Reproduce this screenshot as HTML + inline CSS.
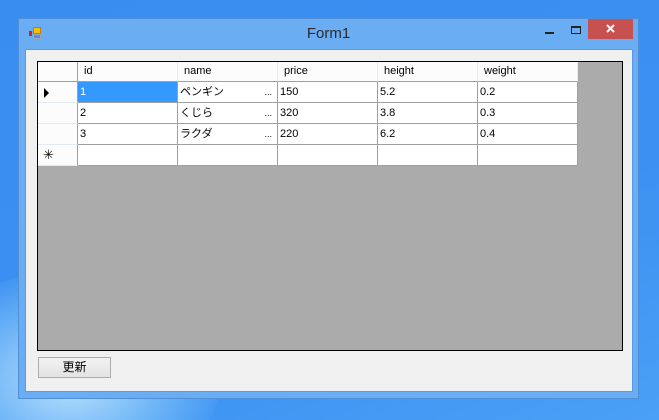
<!DOCTYPE html>
<html><head><meta charset="utf-8"><style>
*{margin:0;padding:0;box-sizing:border-box}
html,body{width:659px;height:420px;overflow:hidden}
body{position:relative;
background:linear-gradient(160deg,#3a8df0 0%,#3b90f2 60%,#4aa0f5 100%);font-family:"Liberation Sans","Noto Sans CJK JP",sans-serif}
.glow{position:absolute;left:-80px;top:270px;width:300px;height:220px;border-radius:50%;
background:radial-gradient(ellipse at center,rgba(200,235,255,0.9) 0%,rgba(150,210,250,0.5) 45%,rgba(80,160,240,0) 75%)}
.win{position:absolute;left:18px;top:18px;width:621px;height:381px;background:#6aadf3;border:1px solid #4f8fd8}
.title{position:absolute;left:0;top:0;width:100%;height:30px;text-align:center;line-height:30px;font-size:15px;color:#2b2b2b}
.client{position:absolute;left:6px;top:30px;width:608px;height:343px;background:#f0f0f0;border:1px solid #5a9ae0}
.close{position:absolute;left:569px;top:0;width:45px;height:20px;background:#c75050}
.min{position:absolute;left:526px;top:13px;width:9px;height:2px;background:#222}
.max{position:absolute;left:552px;top:7px;width:10px;height:8px;border:1px solid #222;border-top:2px solid #222}
.grid{position:absolute;left:37px;top:61px;width:586px;height:290px;background:#ababab;border:1px solid #000;font-size:11px;color:#000}
.c{position:absolute;background:#fff;border-right:1px solid #a0a0a0;border-bottom:1px solid #a0a0a0;padding-left:2px;line-height:20px;white-space:nowrap;width:100px;height:21px}
.h{background:#fcfcfc;border-right:1px solid #e3ebf7;height:20px;padding-left:6px;line-height:19px}
.rh{background:#fcfcfc;width:40px;border-bottom:1px solid #e3ebf7}
.sel{background:#3399ff;color:#fff}
.dots{position:absolute;right:5px;top:0;font-size:9px}
.btn{position:absolute;left:38px;top:357px;width:73px;height:21px;border:1px solid #adadad;background:linear-gradient(#f2f2f2,#e3e3e3);font-size:12px;text-align:center;line-height:19px}
</style></head><body>
<div class="glow"></div>
<div class="win">
 <div class="title">Form1</div>
 <svg style="position:absolute;left:9px;top:8px" width="14" height="13"><rect x="5.5" y="0.5" width="7" height="6" fill="#f5c000" stroke="#c08000"/><rect x="1" y="4" width="3" height="5" fill="#d02020"/><rect x="5.5" y="7.5" width="7" height="4" fill="#5a8fe0" stroke="#9ab"/></svg>
 <div class="min"></div><div class="max"></div>
 <div class="close"><svg width="45" height="20"><path d="M19 6L26 13M26 6L19 13" stroke="#fff" stroke-width="2"/></svg></div>
 <div class="client"></div>
</div>
<div class="grid">
<div class="c h rh" style="left:0;top:0;border-bottom:1px solid #a0a0a0;border-right:1px solid #a0a0a0;height:20px"></div>
<div class="c h" style="left:40px;top:0;border-bottom:1px solid #a0a0a0">id</div>
<div class="c h" style="left:140px;top:0;border-bottom:1px solid #a0a0a0">name</div>
<div class="c h" style="left:240px;top:0;border-bottom:1px solid #a0a0a0">price</div>
<div class="c h" style="left:340px;top:0;border-bottom:1px solid #a0a0a0">height</div>
<div class="c h" style="left:440px;top:0;border-bottom:1px solid #a0a0a0">weight</div>

<div class="c rh" style="left:0;top:20px"><svg width="10" height="10" style="position:absolute;left:5px;top:6px"><path d="M1 0L6 5L1 10Z" fill="#000"/></svg></div>
<div class="c sel" style="left:40px;top:20px">1</div>
<div class="c" style="left:140px;top:20px">ペンギン<span class="dots">...</span></div>
<div class="c" style="left:240px;top:20px">150</div>
<div class="c" style="left:340px;top:20px">5.2</div>
<div class="c" style="left:440px;top:20px">0.2</div>

<div class="c rh" style="left:0;top:41px"></div>
<div class="c" style="left:40px;top:41px">2</div>
<div class="c" style="left:140px;top:41px">くじら<span class="dots">...</span></div>
<div class="c" style="left:240px;top:41px">320</div>
<div class="c" style="left:340px;top:41px">3.8</div>
<div class="c" style="left:440px;top:41px">0.3</div>

<div class="c rh" style="left:0;top:62px"></div>
<div class="c" style="left:40px;top:62px">3</div>
<div class="c" style="left:140px;top:62px">ラクダ<span class="dots">...</span></div>
<div class="c" style="left:240px;top:62px">220</div>
<div class="c" style="left:340px;top:62px">6.2</div>
<div class="c" style="left:440px;top:62px">0.4</div>

<div class="c rh" style="left:0;top:83px;font-size:13px;padding-left:5px">✳</div>
<div class="c" style="left:40px;top:83px"></div>
<div class="c" style="left:140px;top:83px"></div>
<div class="c" style="left:240px;top:83px"></div>
<div class="c" style="left:340px;top:83px"></div>
<div class="c" style="left:440px;top:83px"></div>
</div>
<div class="btn">更新</div>
</body></html>
